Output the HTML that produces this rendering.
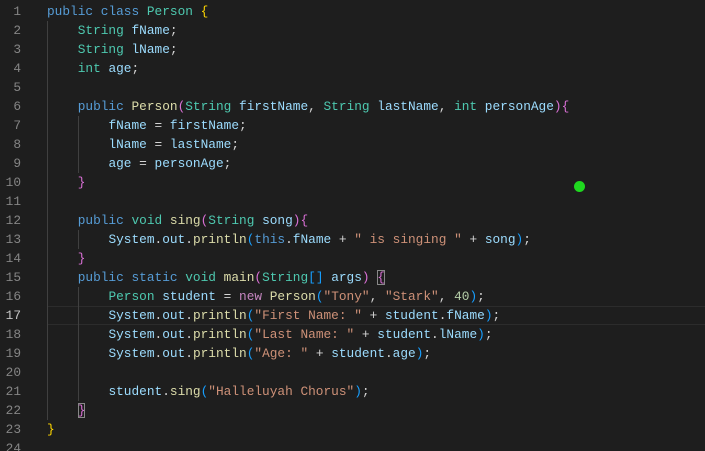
<!DOCTYPE html>
<html><head><meta charset="utf-8"><style>
html,body{margin:0;padding:0;background:#1e1e1e;width:705px;height:451px;overflow:hidden}
.ed{position:relative;height:451px;overflow:hidden;font-family:"Liberation Mono",monospace;font-size:12.8px;line-height:19px;white-space:pre;color:#d4d4d4}
.l{position:absolute;left:0;height:19px;width:705px}
.n{position:absolute;left:0;width:21px;text-align:right;color:#858585}
.c{position:absolute;left:47px}
.k{color:#569cd6}.t{color:#4ec9b0}.v{color:#9cdcfe}.f{color:#dcdcaa}.s{color:#ce9178}.m{color:#b5cea8}.p{color:#c586c0}
.y{color:#ffd700}.pk{color:#da70d6}.b{color:#179fff}
.g{position:absolute;width:1px;background:#404040}
.cur{position:absolute;left:47px;right:0;top:306px;height:17px;border-top:1px solid #2c2c2c;border-bottom:1px solid #2c2c2c}
.bx{outline:1px solid #888;outline-offset:-1px}
</style></head><body><div class="ed">
<div class="cur"></div>
<div class="g" style="left:47px;top:21px;height:399px"></div>
<div class="g" style="left:78px;top:116px;height:57px"></div>
<div class="g" style="left:78px;top:230px;height:19px"></div>
<div class="g" style="left:78px;top:287px;height:114px"></div>
<div class="l" style="top:2px"><span class="n">1</span><span class="c"><span class="k">public</span> <span class="k">class</span> <span class="t">Person</span> <span class="y">{</span></span></div>
<div class="l" style="top:21px"><span class="n">2</span><span class="c">    <span class="t">String</span> <span class="v">fName</span>;</span></div>
<div class="l" style="top:40px"><span class="n">3</span><span class="c">    <span class="t">String</span> <span class="v">lName</span>;</span></div>
<div class="l" style="top:59px"><span class="n">4</span><span class="c">    <span class="t">int</span> <span class="v">age</span>;</span></div>
<div class="l" style="top:78px"><span class="n">5</span></div>
<div class="l" style="top:97px"><span class="n">6</span><span class="c">    <span class="k">public</span> <span class="f">Person</span><span class="pk">(</span><span class="t">String</span> <span class="v">firstName</span>, <span class="t">String</span> <span class="v">lastName</span>, <span class="t">int</span> <span class="v">personAge</span><span class="pk">){</span></span></div>
<div class="l" style="top:116px"><span class="n">7</span><span class="c">        <span class="v">fName</span> = <span class="v">firstName</span>;</span></div>
<div class="l" style="top:135px"><span class="n">8</span><span class="c">        <span class="v">lName</span> = <span class="v">lastName</span>;</span></div>
<div class="l" style="top:154px"><span class="n">9</span><span class="c">        <span class="v">age</span> = <span class="v">personAge</span>;</span></div>
<div class="l" style="top:173px"><span class="n">10</span><span class="c">    <span class="pk">}</span></span></div>
<div class="l" style="top:192px"><span class="n">11</span></div>
<div class="l" style="top:211px"><span class="n">12</span><span class="c">    <span class="k">public</span> <span class="t">void</span> <span class="f">sing</span><span class="pk">(</span><span class="t">String</span> <span class="v">song</span><span class="pk">){</span></span></div>
<div class="l" style="top:230px"><span class="n">13</span><span class="c">        <span class="v">System</span>.<span class="v">out</span>.<span class="f">println</span><span class="b">(</span><span class="k">this</span>.<span class="v">fName</span> + <span class="s">" is singing "</span> + <span class="v">song</span><span class="b">)</span>;</span></div>
<div class="l" style="top:249px"><span class="n">14</span><span class="c">    <span class="pk">}</span></span></div>
<div class="l" style="top:268px"><span class="n">15</span><span class="c">    <span class="k">public</span> <span class="k">static</span> <span class="t">void</span> <span class="f">main</span><span class="pk">(</span><span class="t">String</span><span class="b">[]</span> <span class="v">args</span><span class="pk">)</span> <span class="pk bx">{</span></span></div>
<div class="l" style="top:287px"><span class="n">16</span><span class="c">        <span class="t">Person</span> <span class="v">student</span> = <span class="p">new</span> <span class="f">Person</span><span class="b">(</span><span class="s">"Tony"</span>, <span class="s">"Stark"</span>, <span class="m">40</span><span class="b">)</span>;</span></div>
<div class="l" style="top:306px"><span class="n" style="color:#c6c6c6">17</span><span class="c">        <span class="v">System</span>.<span class="v">out</span>.<span class="f">println</span><span class="b">(</span><span class="s">"First Name: "</span> + <span class="v">student</span>.<span class="v">fName</span><span class="b">)</span>;</span></div>
<div class="l" style="top:325px"><span class="n">18</span><span class="c">        <span class="v">System</span>.<span class="v">out</span>.<span class="f">println</span><span class="b">(</span><span class="s">"Last Name: "</span> + <span class="v">student</span>.<span class="v">lName</span><span class="b">)</span>;</span></div>
<div class="l" style="top:344px"><span class="n">19</span><span class="c">        <span class="v">System</span>.<span class="v">out</span>.<span class="f">println</span><span class="b">(</span><span class="s">"Age: "</span> + <span class="v">student</span>.<span class="v">age</span><span class="b">)</span>;</span></div>
<div class="l" style="top:363px"><span class="n">20</span></div>
<div class="l" style="top:382px"><span class="n">21</span><span class="c">        <span class="v">student</span>.<span class="f">sing</span><span class="b">(</span><span class="s">"Halleluyah Chorus"</span><span class="b">)</span>;</span></div>
<div class="l" style="top:401px"><span class="n">22</span><span class="c">    <span class="pk bx">}</span></span></div>
<div class="l" style="top:420px"><span class="n">23</span><span class="c"><span class="y">}</span></span></div>
<div class="l" style="top:439px;height:12px;overflow:hidden"><span class="n">24</span></div>
<div style="position:absolute;left:574px;top:181px;width:11px;height:11px;border-radius:50%;background:#1fd81f"></div>
</div></body></html>
